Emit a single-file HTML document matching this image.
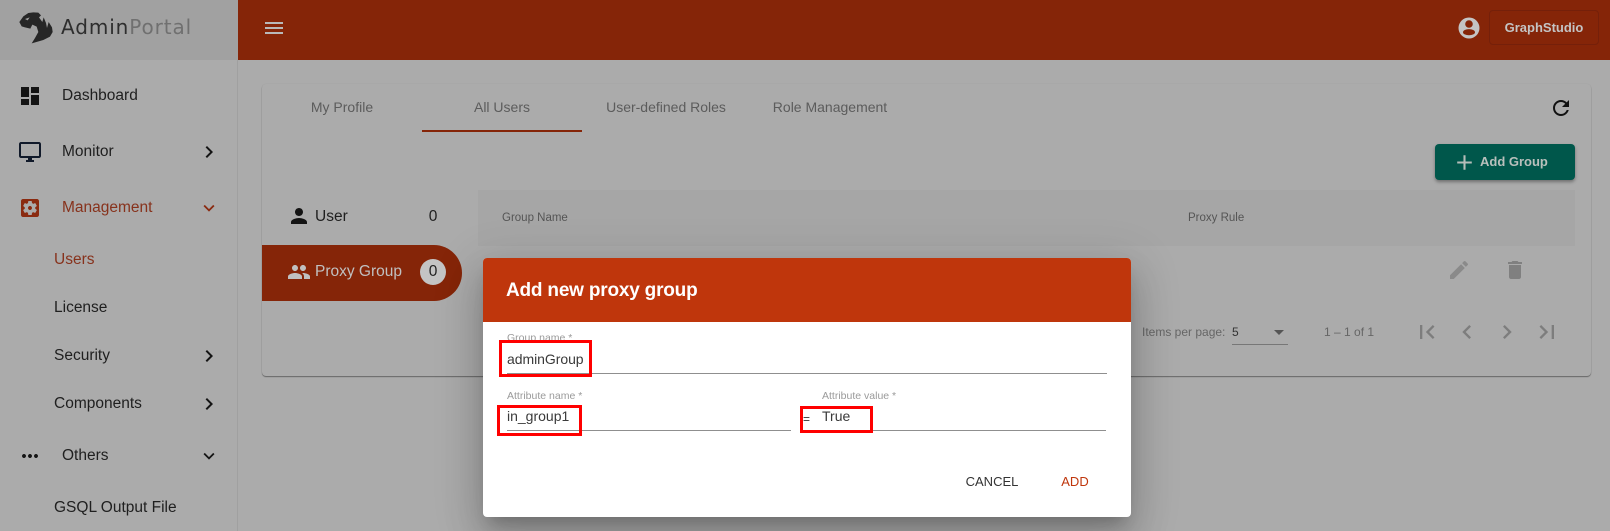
<!DOCTYPE html>
<html><head><meta charset="utf-8">
<style>
html,body{margin:0;padding:0;width:1610px;height:531px;overflow:hidden;background:#ababab}
body{position:relative;font-family:"Liberation Sans",sans-serif}
div,svg{position:absolute}
.t{line-height:20px;height:20px;white-space:nowrap}
.nav{font-size:15.5px;color:#1f1f1f}
svg{fill:currentColor}
.tab{font-size:14px;color:#5c5c5c;width:160px;text-align:center;top:97px}
.lab{font-size:10.5px;color:#9a9a9a}
.val{font-size:14px;color:#3a3a3a}
.line{height:1px;background:#8f8f8f}
.red{border:3px solid #f00;box-sizing:border-box}
</style></head><body>

<!-- sidebar -->
<div style="left:0;top:0;width:238px;height:60px;background:#a1a1a1"></div>
<div style="left:237px;top:60px;width:1px;height:471px;background:#a0a0a0"></div>
<svg style="left:15px;top:8px;color:#262626" width="45" height="42" viewBox="0 0 135 126"><path d="M13 42 25 25 40 15 55 13 70 14 78 22 72 28 82 42 86 28 93 45 96 60 101 42 111 58 113 72 105 86 85 96 50 106 60 90 70 72 65 56 52 50 46 62 30 58 20 55Z"/><path d="M30 33 44 28 38 37Z" fill="#a1a1a1"/></svg>
<div class="t" style="left:61px;top:17px;font-family:'DejaVu Sans',sans-serif;font-size:20px;letter-spacing:.9px;color:#333"><span style="color:#2e2e2e">Admin</span><span style="color:#707070">Portal</span></div>

<svg style="left:18px;top:84px;color:#141414" width="24" height="24" viewBox="0 0 24 24"><path d="M3 13h8V3H3v10zm0 8h8v-6H3v6zm10 0h8V11h-8v10zm0-18v6h8V3h-8z"/></svg>
<div class="t nav" style="left:62px;top:86px">Dashboard</div>
<svg style="left:18px;top:140px;color:#111a2a" width="24" height="24" viewBox="0 0 24 24"><path d="M21 2H3c-1.1 0-2 .9-2 2v12c0 1.1.9 2 2 2h7v2H8v2h8v-2h-2v-2h7c1.1 0 2-.9 2-2V4c0-1.1-.9-2-2-2zm0 14H3V4h18v12z"/></svg>
<div class="t nav" style="left:62px;top:142px">Monitor</div>
<svg style="left:197px;top:140px;color:#141414" width="24" height="24" viewBox="0 0 24 24"><path d="M10 6L8.59 7.41 13.17 12l-4.58 4.59L10 18l6-6z"/></svg>
<svg style="left:18px;top:196px;color:#8a2a10" width="24" height="24" viewBox="0 0 24 24"><path d="M12 10c-1.1 0-2 .9-2 2s.9 2 2 2 2-.9 2-2-.9-2-2-2zm7-7H5c-1.11 0-2 .9-2 2v14c0 1.1.89 2 2 2h14c1.11 0 2-.9 2-2V5c0-1.1-.89-2-2-2zm-1.75 9c0 .23-.02.46-.05.68l1.48 1.16c.13.11.17.3.08.45l-1.4 2.42c-.09.15-.27.21-.43.15l-1.74-.7c-.36.28-.76.51-1.18.69l-.26 1.85c-.03.17-.18.3-.35.3h-2.8c-.17 0-.32-.13-.35-.29l-.26-1.85c-.43-.18-.82-.41-1.18-.69l-1.74.7c-.16.06-.34 0-.43-.15l-1.4-2.42c-.09-.15-.05-.34.08-.45l1.48-1.16c-.03-.23-.05-.46-.05-.69 0-.23.02-.46.05-.68l-1.48-1.16c-.13-.11-.17-.3-.08-.45l1.4-2.42c.09-.15.27-.21.43-.15l1.74.7c.36-.28.76-.51 1.18-.69l.26-1.85c.03-.17.18-.3.35-.3h2.8c.17 0 .32.13.35.29l.26 1.85c.43.18.82.41 1.18.69l1.74-.7c.16-.06.34 0 .43.15l1.4 2.42c.09.15.05.34-.08.45l-1.48 1.16c.03.23.05.46.05.69z"/></svg>
<div class="t nav" style="left:62px;top:198px;color:#87321c">Management</div>
<svg style="left:198px;top:197px;color:#8a2a10" width="22" height="22" viewBox="0 0 24 24"><path d="M16.59 8.59L12 13.17 7.41 8.59 6 10l6 6 6-6z"/></svg>
<div class="t nav" style="left:54px;top:250px;color:#87321c">Users</div>
<div class="t nav" style="left:54px;top:298px">License</div>
<div class="t nav" style="left:54px;top:346px">Security</div>
<svg style="left:197px;top:344px;color:#141414" width="24" height="24" viewBox="0 0 24 24"><path d="M10 6L8.59 7.41 13.17 12l-4.58 4.59L10 18l6-6z"/></svg>
<div class="t nav" style="left:54px;top:394px">Components</div>
<svg style="left:197px;top:392px;color:#141414" width="24" height="24" viewBox="0 0 24 24"><path d="M10 6L8.59 7.41 13.17 12l-4.58 4.59L10 18l6-6z"/></svg>
<svg style="left:18px;top:444px;color:#141414" width="24" height="24" viewBox="0 0 24 24"><path d="M6 10c-1.1 0-2 .9-2 2s.9 2 2 2 2-.9 2-2-.9-2-2-2zm12 0c-1.1 0-2 .9-2 2s.9 2 2 2 2-.9 2-2-.9-2-2-2zm-6 0c-1.1 0-2 .9-2 2s.9 2 2 2 2-.9 2-2-.9-2-2-2z"/></svg>
<div class="t nav" style="left:62px;top:446px">Others</div>
<svg style="left:198px;top:445px;color:#141414" width="22" height="22" viewBox="0 0 24 24"><path d="M16.59 8.59L12 13.17 7.41 8.59 6 10l6 6 6-6z"/></svg>
<div class="t nav" style="left:54px;top:498px">GSQL Output File</div>

<!-- top bar -->
<div style="left:238px;top:0;width:1372px;height:60px;background:#852508"></div>
<svg style="left:262px;top:16px;color:#b9b9b9" width="24" height="24" viewBox="0 0 24 24"><path d="M3 18h18v-2H3v2zm0-5h18v-2H3v2zm0-7v2h18V6H3z"/></svg>
<svg style="left:1458px;top:17px" width="22" height="22" viewBox="0 0 22 22"><circle cx="11" cy="11" r="10.5" fill="#c4c4c4"/><circle cx="11" cy="7" r="3.8" fill="#852508"/><ellipse cx="11" cy="15.2" rx="6" ry="3.1" fill="#852508"/></svg>
<div class="t" style="left:1489px;top:10px;width:110px;height:35px;line-height:33px;box-sizing:border-box;border:1px solid #75200a;border-radius:4px;color:#c4c4c4;font-size:13px;font-weight:700;text-align:center">GraphStudio</div>

<!-- card -->
<div style="left:262px;top:84px;width:1329px;height:292px;background:#ababab;border-radius:4px;box-shadow:0 1px 1px rgba(0,0,0,.4),0 0 1px rgba(0,0,0,.08)"></div>
<div class="t tab" style="left:262px">My Profile</div>
<div class="t tab" style="left:422px">All Users</div>
<div style="left:422px;top:130px;width:160px;height:2px;background:#852508"></div>
<div class="t tab" style="left:586px">User-defined Roles</div>
<div class="t tab" style="left:750px">Role Management</div>
<svg style="left:1549px;top:96px;color:#111" width="24" height="24" viewBox="0 0 24 24"><path d="M17.65 6.35C16.2 4.9 14.21 4 12 4c-4.42 0-7.99 3.58-7.99 8s3.57 8 7.99 8c3.73 0 6.84-2.55 7.73-6h-2.08c-.82 2.33-3.04 4-5.65 4-3.31 0-6-2.69-6-6s2.69-6 6-6c1.66 0 3.14.69 4.22 1.78L13 11h7V4l-2.35 2.35z"/></svg>

<div style="left:1435px;top:144px;width:140px;height:36px;background:#00574b;border-radius:4px;box-shadow:0 2px 3px rgba(0,0,0,.35)"></div>
<svg style="left:1452px;top:150px;color:#b5bdb9" width="25" height="25" viewBox="0 0 24 24"><path d="M19 13h-6v6h-2v-6H5v-2h6V5h2v6h6v2z"/></svg>
<div class="t" style="left:1480px;top:152px;color:#b9c0bc;font-size:13px;font-weight:700">Add Group</div>

<svg style="left:287px;top:204px;color:#141414" width="24" height="24" viewBox="0 0 24 24"><path d="M12 12c2.21 0 4-1.79 4-4s-1.79-4-4-4-4 1.79-4 4 1.79 4 4 4zm0 2c-2.67 0-8 1.34-8 4v2h16v-2c0-2.66-5.33-4-8-4z"/></svg>
<div class="t" style="left:315px;top:207px;font-size:15.5px;color:#1f1f1f">User</div>
<div class="t" style="left:423px;width:20px;text-align:center;top:207px;font-size:15.5px;color:#1f1f1f">0</div>

<div style="left:262px;top:245px;width:200px;height:56px;background:#852508;border-radius:0 28px 28px 0"></div>
<svg style="left:287px;top:260px;color:#c0c0c0" width="24" height="24" viewBox="0 0 24 24"><path d="M16 11c1.66 0 2.99-1.34 2.99-3S17.66 5 16 5c-1.66 0-3 1.34-3 3s1.34 3 3 3zm-8 0c1.66 0 2.99-1.34 2.99-3S9.66 5 8 5C6.34 5 5 6.34 5 8s1.34 3 3 3zm0 2c-2.33 0-7 1.17-7 3.5V19h14v-2.5c0-2.33-4.67-3.5-7-3.5zm8 0c-.29 0-.62.02-.97.05 1.16.84 1.97 1.97 1.97 3.45V19h6v-2.5c0-2.33-4.67-3.5-7-3.5z"/></svg>
<div class="t" style="left:315px;top:262px;font-size:15.5px;color:#c0c0c0">Proxy Group</div>
<div class="t" style="left:420px;top:259px;width:26px;height:26px;border-radius:13px;background:#c4c4c4;text-align:center;line-height:26px;font-size:15.5px;color:#222">0</div>

<div style="left:478px;top:190px;width:1097px;height:56px;background:#a6a6a6"></div>
<div class="t" style="left:502px;top:208px;font-size:11.5px;color:#555">Group Name</div>
<div class="t" style="left:1188px;top:208px;font-size:11.5px;color:#555">Proxy Rule</div>

<svg style="left:1447px;top:258px;color:#8a8a8a" width="24" height="24" viewBox="0 0 24 24"><path d="M3 17.25V21h3.75L17.81 9.94l-3.75-3.75L3 17.25zM20.71 7.04c.39-.39.39-1.02 0-1.41l-2.34-2.34c-.39-.39-1.02-.39-1.41 0l-1.83 1.83 3.75 3.75 1.83-1.83z"/></svg>
<svg style="left:1503px;top:258px;color:#808080" width="24" height="24" viewBox="0 0 24 24"><path d="M6 19c0 1.1.9 2 2 2h8c1.1 0 2-.9 2-2V7H6v12zM19 4h-3.5l-1-1h-5l-1 1H5v2h14V4z"/></svg>

<div class="t" style="left:1142px;top:322px;font-size:12px;color:#666">Items per page:</div>
<div class="t" style="left:1232px;top:322px;font-size:12px;color:#333">5</div>
<div style="left:1274px;top:330px;width:0;height:0;border-left:5px solid transparent;border-right:5px solid transparent;border-top:5px solid #555"></div>
<div style="left:1232px;top:344px;width:56px;height:1px;background:#777"></div>
<div class="t" style="left:1324px;top:322px;font-size:12px;color:#666">1 – 1 of 1</div>
<svg style="left:1413px;top:318px;color:#7d7d7d" width="28" height="28" viewBox="0 0 24 24"><path d="M18.41 16.59L13.82 12l4.59-4.59L17 6l-6 6 6 6zM6 6h2v12H6z"/></svg>
<svg style="left:1453px;top:318px;color:#7d7d7d" width="28" height="28" viewBox="0 0 24 24"><path d="M15.41 7.41L14 6l-6 6 6 6 1.41-1.41L10.83 12z"/></svg>
<svg style="left:1493px;top:318px;color:#7d7d7d" width="28" height="28" viewBox="0 0 24 24"><path d="M10 6L8.59 7.41 13.17 12l-4.58 4.59L10 18l6-6z"/></svg>
<svg style="left:1533px;top:318px;color:#7d7d7d" width="28" height="28" viewBox="0 0 24 24"><path d="M5.59 7.41L10.18 12l-4.59 4.59L7 18l6-6-6-6zM16 6h2v12h-2z"/></svg>

<!-- dialog -->
<div style="left:483px;top:258px;width:648px;height:259px;background:#fff;border-radius:4px;box-shadow:0 11px 15px -7px rgba(0,0,0,.2),0 24px 38px 3px rgba(0,0,0,.14),0 9px 46px 8px rgba(0,0,0,.12)"></div>
<div style="left:483px;top:258px;width:648px;height:64px;background:#bf360c;border-radius:4px 4px 0 0"></div>
<div class="t" style="left:506px;top:281px;color:#fff;font-size:19px;font-weight:700;letter-spacing:-.2px">Add new proxy group</div>

<div class="t lab" style="left:507px;top:328px">Group name *</div>
<div class="t val" style="left:507px;top:349px;letter-spacing:-.05px">adminGroup</div>
<div class="line" style="left:507px;top:373px;width:600px"></div>
<div class="red" style="left:499px;top:340px;width:93px;height:37px"></div>

<div class="t lab" style="left:507px;top:386px">Attribute name *</div>
<div class="t val" style="left:507px;top:406px">in_group1</div>
<div class="line" style="left:507px;top:430px;width:284px"></div>
<div class="red" style="left:497px;top:405px;width:85px;height:31px"></div>

<div class="t lab" style="left:822px;top:386px">Attribute value *</div>
<div class="t" style="left:803px;top:409px;font-size:12px;color:#333">=</div>
<div class="t val" style="left:822px;top:406px">True</div>
<div class="line" style="left:804px;top:430px;width:302px"></div>
<div class="red" style="left:800px;top:406px;width:73px;height:27px"></div>

<div class="t" style="left:952px;width:80px;text-align:center;top:472px;font-size:13px;color:#333">CANCEL</div>
<div class="t" style="left:1045px;width:60px;text-align:center;top:472px;font-size:13px;color:#bf360c">ADD</div>

</body></html>
